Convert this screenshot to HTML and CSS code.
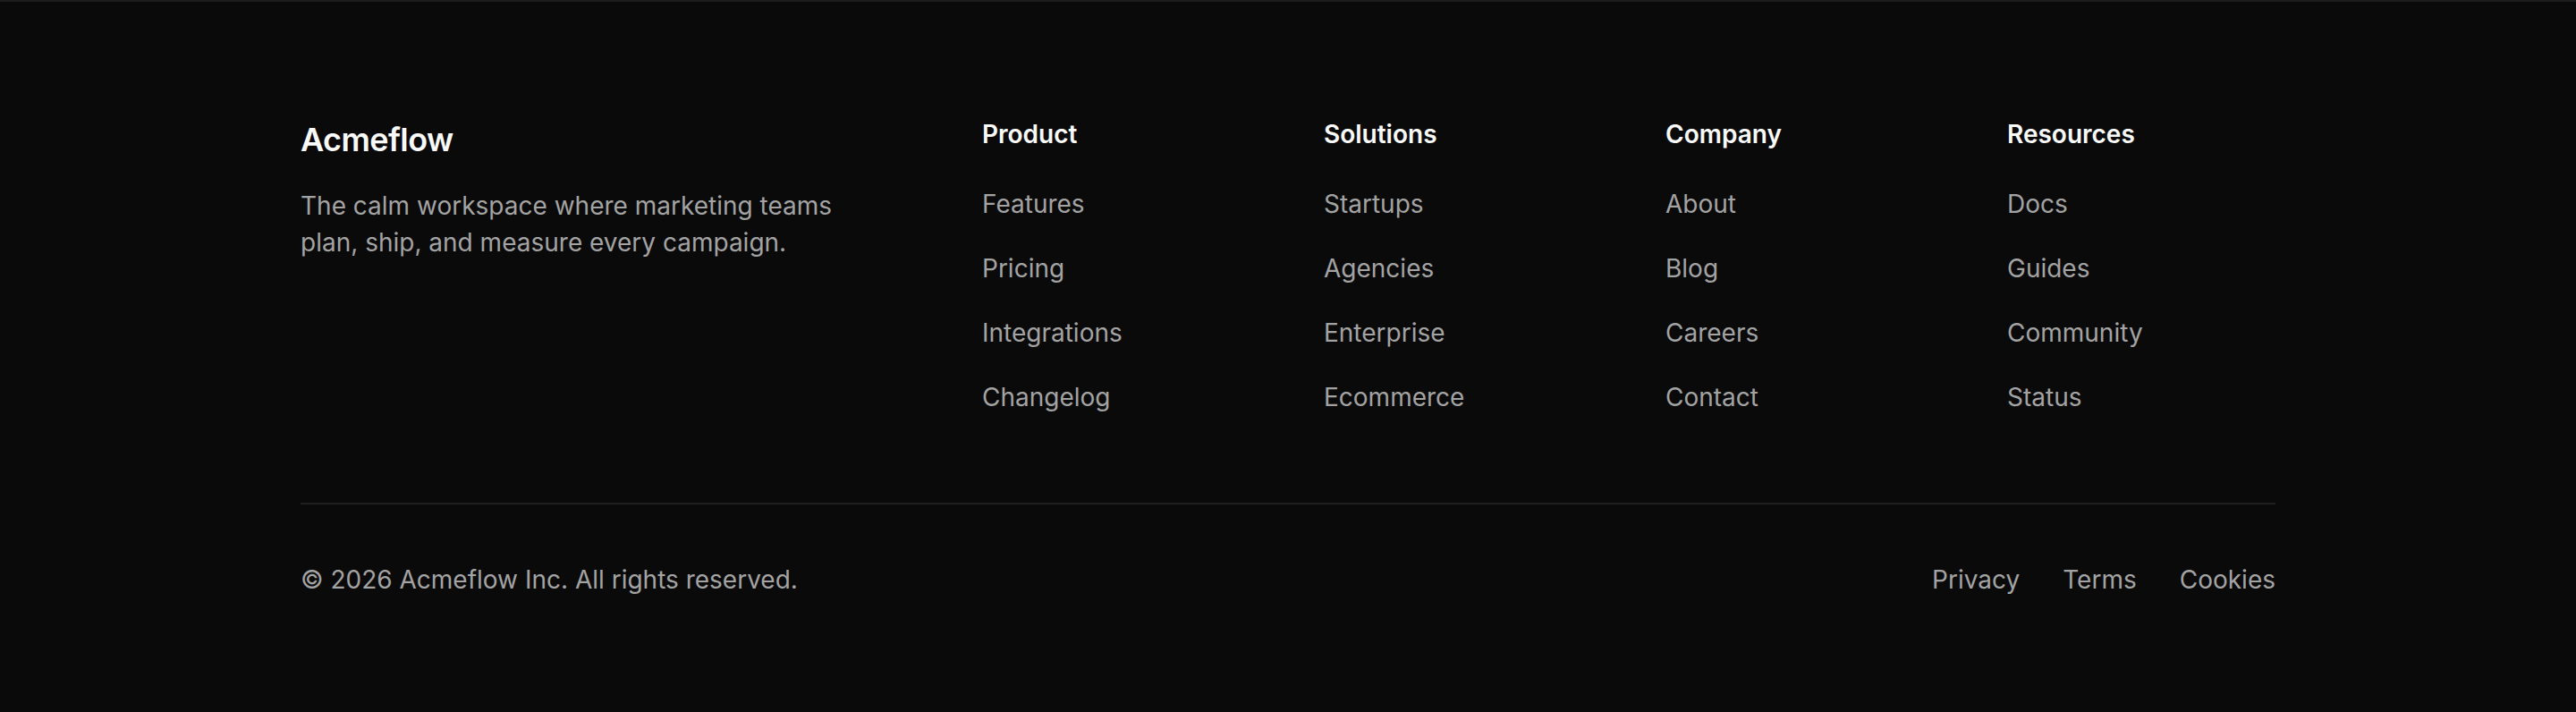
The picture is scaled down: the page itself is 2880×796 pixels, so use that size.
FILE: index.html
```html
<!DOCTYPE html>
<html lang="en">
<head>
  <meta charset="UTF-8">
  <meta name="viewport" content="width=device-width, initial-scale=1.0">
  <title>Acmeflow</title>
  <link rel="stylesheet" href="styles.css">
</head>
<body>

  <footer class="site-footer">
    <div class="container">

      <!-- Top: brand + link columns -->
      <div class="footer-top">
        <div class="brand-col">
          <div class="brand">Acmeflow</div>
          <p class="brand-text">The calm workspace where marketing teams plan, ship, and measure every campaign.</p>
        </div>

        <div class="link-col">
          <h4>Product</h4>
          <ul>
            <li><a href="#">Features</a></li>
            <li><a href="#">Pricing</a></li>
            <li><a href="#">Integrations</a></li>
            <li><a href="#">Changelog</a></li>
          </ul>
        </div>

        <div class="link-col">
          <h4>Solutions</h4>
          <ul>
            <li><a href="#">Startups</a></li>
            <li><a href="#">Agencies</a></li>
            <li><a href="#">Enterprise</a></li>
            <li><a href="#">Ecommerce</a></li>
          </ul>
        </div>

        <div class="link-col">
          <h4>Company</h4>
          <ul>
            <li><a href="#">About</a></li>
            <li><a href="#">Blog</a></li>
            <li><a href="#">Careers</a></li>
            <li><a href="#">Contact</a></li>
          </ul>
        </div>

        <div class="link-col">
          <h4>Resources</h4>
          <ul>
            <li><a href="#">Docs</a></li>
            <li><a href="#">Guides</a></li>
            <li><a href="#">Community</a></li>
            <li><a href="#">Status</a></li>
          </ul>
        </div>
      </div>

      <!-- Bottom: copyright + legal -->
      <div class="footer-bottom">
        <p class="copyright">&copy; 2026 Acmeflow Inc. All rights reserved.</p>
        <nav class="legal">
          <a href="#">Privacy</a>
          <a href="#">Terms</a>
          <a href="#">Cookies</a>
        </nav>
      </div>

    </div>
  </footer>

</body>
</html>
```

FILE: styles.css
```css
html {
  background-color: #0a0a0a;
}

body {
  font-family: Inter, "Noto Sans", Arial, sans-serif;
  background-color: #0a0a0a;
  color: #a3a3a3;
  margin: 0;
  padding: 0;
}

a {
  color: #a3a3a3;
  text-decoration: none;
}

a:hover {
  color: #fafafa;
}

.site-footer {
  border-top: 2px solid #1c1c1c;
  padding: 128px 0;
}

.container {
  box-sizing: border-box;
  max-width: 2400px;
  margin: 0 auto;
  padding: 0 96px;
}

/* Top section */
.footer-top {
  display: grid;
  grid-template-columns: 680px repeat(4, 1fr);
  column-gap: 82px;
  padding-bottom: 98px;
  border-bottom: 2px solid #1f1f1f;
}

.brand {
  color: #fafafa;
  font-size: 36px;
  font-weight: 600;
  line-height: 52px;
  letter-spacing: -0.6px;
}

.brand-text {
  margin: 28px 0 0;
  max-width: 640px;
  font-size: 28px;
  line-height: 41px;
}

.link-col h4 {
  margin: 0 0 38px;
  color: #fafafa;
  font-size: 28px;
  font-weight: 600;
  line-height: 40px;
}

.link-col ul {
  list-style: none;
  margin: 0;
  padding: 0;
  display: flex;
  flex-direction: column;
  gap: 32px;
}

.link-col li {
  font-size: 28px;
  line-height: 40px;
}

/* Bottom section */
.footer-bottom {
  display: flex;
  justify-content: space-between;
  align-items: center;
  padding-top: 64px;
}

.copyright {
  margin: 0;
  font-size: 28px;
  line-height: 40px;
}

.legal {
  display: flex;
  gap: 48px;
  font-size: 28px;
  line-height: 40px;
}
```
